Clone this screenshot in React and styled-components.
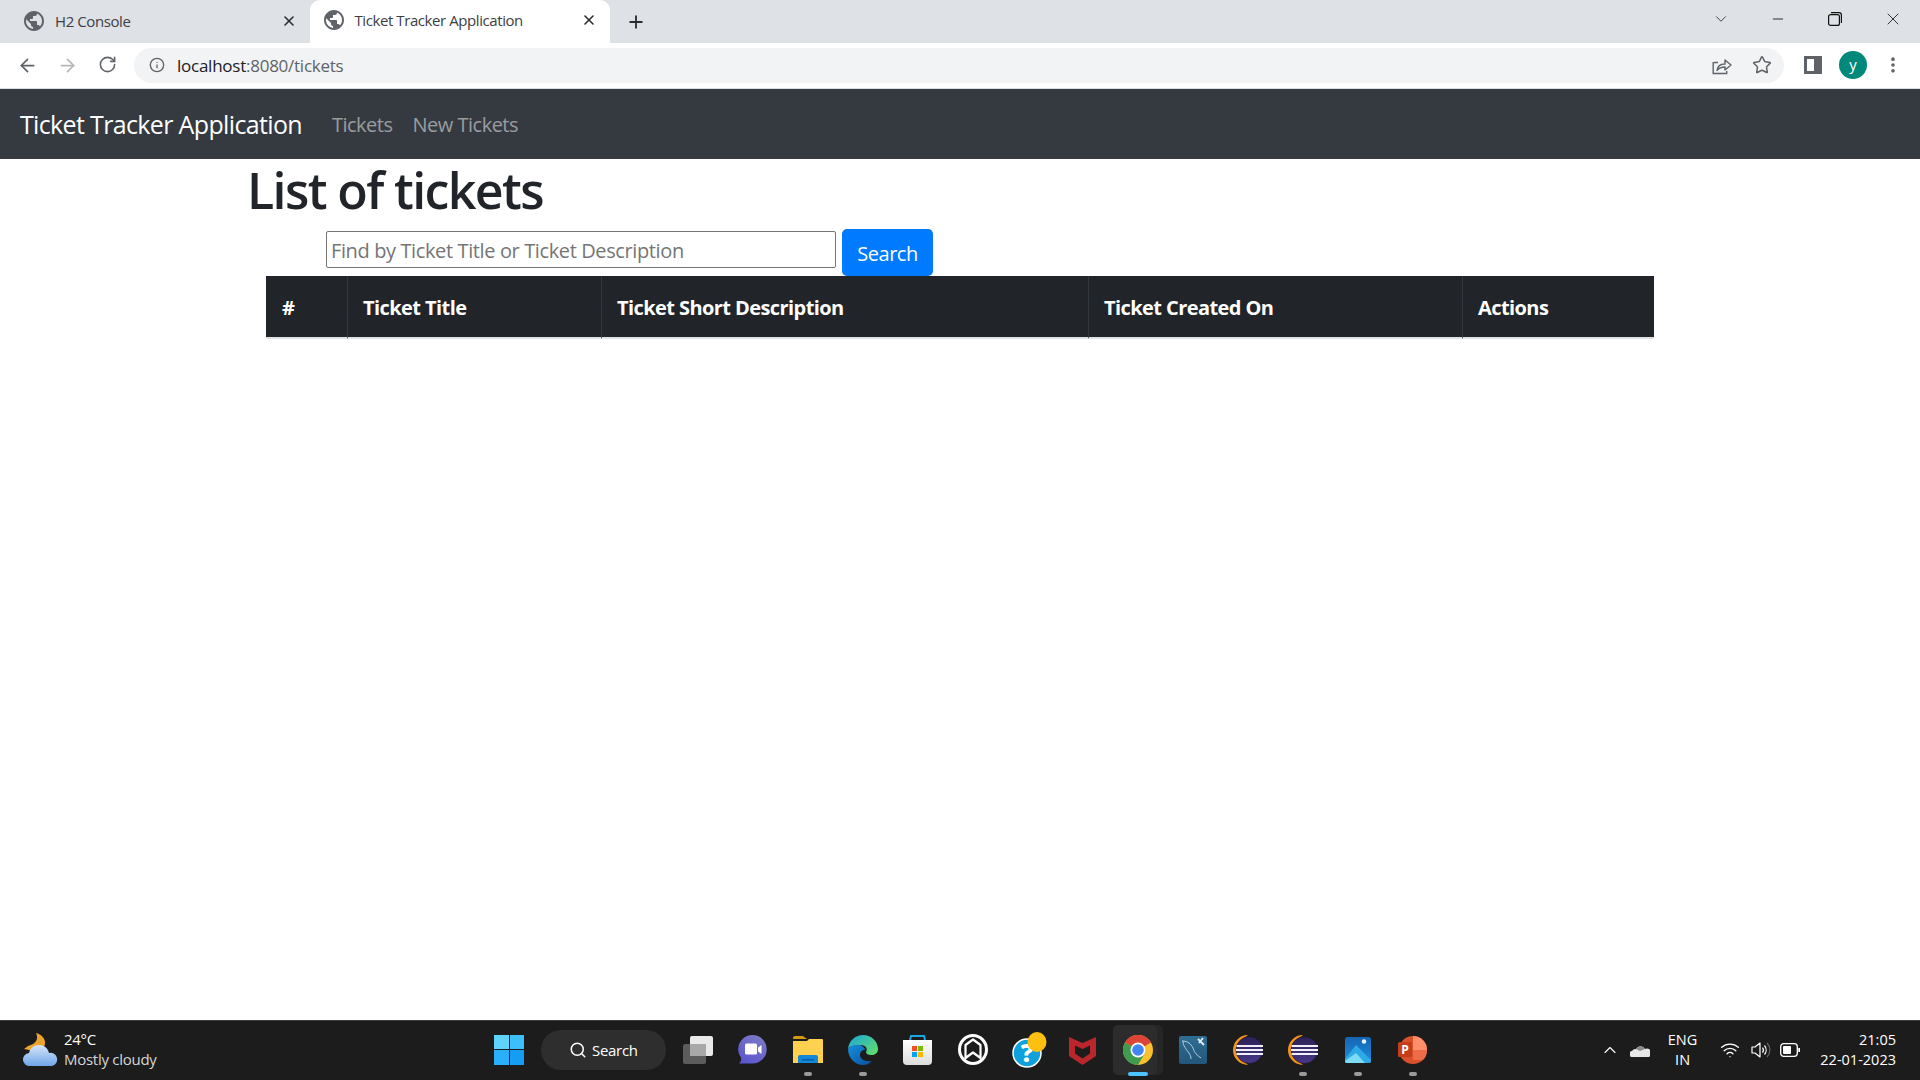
import React from 'react';
import styled, { createGlobalStyle } from 'styled-components';
import {
    ArrowLeft,
    ArrowRight,
    RotateCw,
    Info,
    X,
    Plus,
    ChevronDown,
    ChevronUp,
    Minus,
    Star,
    EllipsisVertical,
    Search,
    Wifi,
} from 'lucide-react';

const GlobalStyle = createGlobalStyle`
    html, body {
        margin: 0;
        padding: 0;
        background: #fff;
    }
    * {
        box-sizing: border-box;
    }
    body {
        font-family: "Open Sans", "Noto Sans", "Liberation Sans", sans-serif;
        color: #212529;
    }
`;

const Screen = styled.div`
    width: 1920px;
    height: 1080px;
    display: flex;
    flex-direction: column;
    overflow: hidden;
`;

/* browser chrome */
const TabStrip = styled.div`
    height: 43px;
    background: #dee1e6;
    display: flex;
    align-items: flex-end;
    padding-left: 9px;
    flex-shrink: 0;
`;

const Tab = styled.div`
    width: 300.5px;
    height: ${(p) => (p.$active ? '43px' : '42px')};
    display: flex;
    align-items: center;
    padding: 0 13px 3px ${(p) => (p.$active ? '14px' : '15px')};
    background: ${(p) => (p.$active ? '#fff' : 'transparent')};
    border-radius: 10px 10px 0 0;
    color: #3c4043;
    svg.close {
        margin-left: auto;
        color: #2a2c2f;
    }
`;

const TabTitle = styled.span`
    margin-left: 11px;
    font-size: 15px;
    letter-spacing: -0.42px;
    white-space: nowrap;
`;

const NewTab = styled.div`
    width: 40px;
    height: 43px;
    margin-left: 6px;
    display: flex;
    align-items: center;
    justify-content: center;
    color: #2a2c2f;
`;

const WindowControls = styled.div`
    margin-left: auto;
    height: 43px;
    display: flex;
    align-items: center;
    color: #333;
`;

const WindowButton = styled.div`
    width: 57px;
    display: flex;
    justify-content: center;
    padding-bottom: 6px;
    &:last-child {
        margin: 0 -1px 0 1px;
    }
`;

const Toolbar = styled.div`
    height: 46px;
    background: #fff;
    border-bottom: 1px solid #dadce0;
    display: flex;
    align-items: center;
    flex-shrink: 0;
    padding-bottom: 1px;
`;

const NavIcon = styled.div`
    width: 40px;
    display: flex;
    justify-content: center;
    color: ${(p) => (p.$off ? '#b4b6b9' : '#5f6368')};
`;

const NavIcons = styled.div`
    display: flex;
    padding-left: 7px;
`;

const Omnibox = styled.div`
    margin-left: 7px;
    width: 1650px;
    height: 35px;
    border-radius: 18px;
    background: #f1f3f4;
    display: flex;
    align-items: center;
    padding: 0 12px 0 15px;
    color: #5f6368;
`;

const Url = styled.span`
    margin-left: 12px;
    font-size: 17px;
    letter-spacing: -0.25px;
    color: #5f6368;
    b {
        font-weight: 400;
        color: #202124;
    }
`;

const OmniActions = styled.div`
    margin-left: auto;
    display: flex;
    align-items: center;
    gap: 20px;
`;

const ToolActions = styled.div`
    display: flex;
    align-items: center;
    padding-left: 20px;
    color: #5f6368;
`;

const SidePanel = styled.div`
    width: 18px;
    height: 18px;
    background: #5f6368;
    padding: 3px 8px 3px 3px;
    &::before {
        content: '';
        display: block;
        width: 100%;
        height: 100%;
        background: #fff;
    }
`;

const Avatar = styled.div`
    width: 28px;
    height: 28px;
    margin-left: 17px;
    border-radius: 50%;
    background: #00897b;
    color: #fff;
    font-size: 15px;
    display: flex;
    align-items: center;
    justify-content: center;
    padding-bottom: 3px;
`;

const MenuDots = styled.div`
    margin-left: 16px;
    display: flex;
`;

/* page */
const NavBar = styled.nav`
    height: 70px;
    background: #343a40;
    display: flex;
    align-items: center;
    padding: 0 20px 0;
    flex-shrink: 0;
`;

const Brand = styled.a`
    font-size: 25px;
    letter-spacing: -0.65px;
    color: #fff;
    white-space: nowrap;
    margin-right: 30px;
`;

const NavLink = styled.a`
    font-size: 20px;
    letter-spacing: -0.5px;
    color: rgba(255, 255, 255, 0.5);
    margin-right: 20px;
    white-space: nowrap;
`;

const Main = styled.main`
    flex: 1;
    padding-left: 249px;
    min-height: 0;
`;

const Heading = styled.h1`
    margin: 0 0 0 -2px;
    height: 70px;
    font-size: 50px;
    line-height: 62px;
    font-weight: 600;
    letter-spacing: -1.6px;
`;

const SearchRow = styled.div`
    display: flex;
    align-items: flex-start;
    margin-left: 77px;
`;

const SearchInput = styled.input`
    width: 510px;
    height: 37px;
    margin-top: 2px;
    border: 1px solid #767676;
    border-radius: 2px;
    padding: 2px 4px 0;
    font: 20px "Open Sans", sans-serif;
    letter-spacing: -0.38px;
    &::placeholder {
        color: #757575;
        opacity: 1;
    }
`;

const SearchButton = styled.button`
    width: 91px;
    height: 47px;
    margin-left: 6px;
    border: 0;
    border-radius: 5px;
    background: #007bff;
    color: #fff;
    font: 20px "Open Sans", sans-serif;
    letter-spacing: -0.5px;
    padding: 1px 0 0;
`;

const Table = styled.table`
    width: 1388px;
    margin-left: 17px;
    border-collapse: separate;
    border-spacing: 0;
    table-layout: fixed;
`;

const Th = styled.th`
    width: ${(p) => p.$w}px;
    height: 63px;
    background: #212529;
    color: #fff;
    font-size: 20px;
    font-weight: 700;
    letter-spacing: -0.58px;
    text-align: left;
    padding: 2px 15px 0 15px;
    border-left: 1px solid #32383e;
    border-bottom: 2px solid #dee2e6;
    &:first-child {
        border-left: 0;
        padding-left: 16px;
    }
`;

/* taskbar */
const Taskbar = styled.footer`
    height: 60px;
    background: #1c1c1c;
    border-top: 1px solid #3a3a3a;
    display: flex;
    align-items: center;
    color: #fff;
    flex-shrink: 0;
    padding-bottom: 2px;
`;

const Weather = styled.div`
    width: 494px;
    display: flex;
    align-items: center;
    padding-left: 23px;
    gap: 5px;
`;

const WeatherText = styled.div`
    font-size: 15px;
    line-height: 20px;
    letter-spacing: -0.27px;
    margin-top: -1px;
    span {
        display: block;
        color: #d6d6d6;
    }
`;

const StartLogo = styled.div`
    width: 30px;
    height: 30px;
    display: grid;
    grid-template-columns: 1fr 1fr;
    gap: 1px;
    margin-right: 17px;
`;

const StartPane = styled.i`
    display: block;
    background: ${(p) => p.$c};
`;

const SearchPill = styled.div`
    width: 125px;
    height: 40px;
    border-radius: 20px;
    background: #2e2e2e;
    display: flex;
    align-items: center;
    padding-left: 28px;
    gap: 5px;
    font-size: 15px;
    letter-spacing: -0.3px;
    margin-right: 4px;
`;

const TaskIcons = styled.div`
    display: flex;
    align-items: center;
`;

const TaskItem = styled.div`
    position: relative;
    width: ${(p) => (p.$active ? '44px' : '55px')};
    height: 50px;
    margin: ${(p) => (p.$active ? '0 8px 0 3px' : '0')};
    padding-left: ${(p) => (p.$active ? '5px' : '0')};
    display: flex;
    align-items: center;
    justify-content: center;
    border-radius: 5px;
    background: ${(p) => (p.$active ? '#2c2c2c' : 'transparent')};
    box-shadow: ${(p) => (p.$active ? '6px 0 0 #262626' : 'none')};
    &::after {
        content: '';
        display: ${(p) => (p.$dot ? 'block' : 'none')};
        position: absolute;
        left: ${(p) => (p.$active ? '56%' : '50%')};
        bottom: -1px;
        transform: translateX(-50%);
        width: ${(p) => (p.$active ? '20px' : '8px')};
        height: 4px;
        border-radius: 2px;
        background: ${(p) => (p.$active ? '#4cc2ff' : '#9a9a9a')};
    }
`;

const Tray = styled.div`
    margin-left: auto;
    display: flex;
    align-items: center;
    padding-right: 24px;
`;

const TrayIcon = styled.div`
    display: flex;
    margin-left: ${(p) => p.$ml || 0}px;
`;

const Lang = styled.div`
    margin-left: 18px;
    font-size: 14.5px;
    line-height: 20px;
    text-align: center;
    padding-top: 1px;
`;

const Clock = styled.div`
    margin-left: 20px;
    font-size: 14.5px;
    line-height: 20px;
    text-align: right;
`;

const Globe = () => (
    <svg width="20" height="20" viewBox="2 2 20 20" fill="#5f6368">
        <path d="M12 2C6.48 2 2 6.48 2 12s4.48 10 10 10 10-4.48 10-10S17.52 2 12 2zm-1 17.93c-3.95-.49-7-3.85-7-7.93 0-.62.08-1.21.21-1.79L9 15v1c0 1.1.9 2 2 2v1.93zm6.9-2.54c-.26-.81-1-1.39-1.9-1.39h-1v-3c0-.55-.45-1-1-1H8v-2h2c.55 0 1-.45 1-1V7h2c1.1 0 2-.9 2-2v-.41c2.93 1.19 5 4.06 5 7.41 0 2.08-.8 3.97-2.1 5.39z" />
    </svg>
);

const ShareIcon = () => (
    <svg width="20" height="20" viewBox="0 0 20 20" fill="none" stroke="#5f6368" strokeWidth="1.4">
        <path d="M2 7.5h4M1.2 7v11.5h13.5V16" />
        <path d="M5 15.5c.5-4 3.5-6.5 8-6.5V5l6 5-6 5v-3c-3 0-6 1-8 3.5z" strokeLinejoin="round" />
    </svg>
);

const RestoreIcon = () => (
    <svg width="14" height="14" viewBox="0 0 14 14" fill="none" stroke="#111" strokeWidth="1.2">
        <rect x="0.6" y="2.6" width="10.8" height="10.8" rx="2" />
        <path d="M3 .6h8a2.4 2.4 0 0 1 2.4 2.4v8" />
    </svg>
);

const WeatherIcon = () => (
    <svg width="36" height="34" viewBox="0 0 36 34">
        <defs>
            <linearGradient id="cloudFill" x1="0" y1="0" x2="0" y2="1">
                <stop offset="0" stopColor="#d7e6f8" />
                <stop offset="1" stopColor="#6ea6ea" />
            </linearGradient>
        </defs>
        <path d="M13 0c3 6 0 11-8 13l-4 3 5 1c6 2 15 0 16-6 1-5-4-10-9-11z" fill="#eda42c" />
        <path d="M7 33a6.500 6.500 0 0 1-1-13c1-5 5-8 10-8 5 0 9 3 10 8a6.500 6.500 0 0 1 3 13z" fill="url(#cloudFill)" />
    </svg>
);

const FilesIcon = () => (
    <svg width="30" height="28" viewBox="0 0 30 28">
        <rect x="0" y="8" width="23" height="20" rx="2" fill="#5c5c5c" />
        <rect x="7" y="0" width="23" height="20" rx="2" fill="#e9e9e9" />
        <rect x="7" y="8" width="16" height="12" fill="#a8a8a8" />
    </svg>
);

const TeamsIcon = () => (
    <svg width="29" height="29" viewBox="0 0 29 29">
        <defs>
            <linearGradient id="teamsFill" x1="0.8" y1="0" x2="0.2" y2="1">
                <stop offset="0" stopColor="#7c7ac4" />
                <stop offset="1" stopColor="#5a55cf" />
            </linearGradient>
        </defs>
        <path d="M14.500 0a14.250 14.250 0 1 1 0 28.500H1c2-2 2.500-4 2-6C1 20 .2 17 .2 14.250A14.250 14.250 0 0 1 14.500 0z" fill="url(#teamsFill)" />
        <rect x="7" y="8.500" width="12" height="11" rx="1.500" fill="#fff" />
        <path d="M20 12.500l3.500-2.500v9l-3.500-2.500z" fill="#fff" />
    </svg>
);

const FolderIcon = () => (
    <svg width="30" height="27" viewBox="0 0 30 27">
        <path d="M0 2a2 2 0 0 1 2-2h7c2 0 3 2 5 3H0z" fill="#d59b10" />
        <path d="M0 27V5h14l2-2h13a1 1 0 0 1 1 1v23z" fill="#ffd14f" />
        <path d="M5 27v-6a2 2 0 0 1 2-2h16a2 2 0 0 1 2 2v6z" fill="#1487d8" />
        <rect x="9" y="23" width="12" height="1.500" fill="#0a5ca3" />
    </svg>
);

const EdgeIcon = () => (
    <svg width="30" height="30" viewBox="0 0 30 30">
        <defs>
            <linearGradient id="edgeTop" x1="0" y1="0" x2="1" y2="0.8">
                <stop offset="0" stopColor="#1aa5dd" />
                <stop offset="1" stopColor="#5fdc6c" />
            </linearGradient>
            <linearGradient id="edgeBody" x1="0" y1="0" x2="1" y2="1">
                <stop offset="0" stopColor="#1690dd" />
                <stop offset="1" stopColor="#0a4f9e" />
            </linearGradient>
        </defs>
        <path d="M0 14C1 5 8 0 15 0c9 0 15 7 15 14 0 4-3 6-7 6-3 0-5-1-5-3 2-3 0-7-5-7C7 10 2 11 0 14z" fill="url(#edgeTop)" />
        <path d="M0 14c2-3 7-5 12-4 3 1 5 3 5 5-3 0-5 2-5 5 0 4 5 7 12 6-3 3-6 4-9 4C7 30 0 23 0 14z" fill="url(#edgeBody)" />
    </svg>
);

const StoreIcon = () => (
    <svg width="29" height="30" viewBox="0 0 29 30">
        <defs>
            <linearGradient id="storeFill" x1="0" y1="0" x2="0" y2="1">
                <stop offset="0" stopColor="#ffffff" />
                <stop offset="1" stopColor="#dcdcdc" />
            </linearGradient>
        </defs>
        <path d="M7 5l1-4h13l1 4" fill="none" stroke="#19a7e0" strokeWidth="2" />
        <path d="M0 5h29v21a4 4 0 0 1-4 4H4a4 4 0 0 1-4-4z" fill="url(#storeFill)" />
        <rect x="9" y="11" width="5" height="5" fill="#f25022" />
        <rect x="15" y="11" width="5" height="5" fill="#7fba00" />
        <rect x="9" y="17" width="5" height="5" fill="#00a4ef" />
        <rect x="15" y="17" width="5" height="5" fill="#ffb900" />
    </svg>
);

const ArchIcon = () => (
    <svg width="30" height="31" viewBox="0 0 30 31">
        <ellipse cx="15" cy="15.500" rx="13.500" ry="14" fill="#1c1c1c" stroke="#fff" strokeWidth="3" />
        <path d="M7.500 24V11L15 5.500 22.500 11v13l-7.500-5.500z" fill="none" stroke="#fff" strokeWidth="2.200" strokeLinejoin="round" />
    </svg>
);

const HelpIcon = () => (
    <svg width="40" height="36" viewBox="-4 0 40 36">
        <circle cx="15" cy="21" r="14" fill="#0ea1dc" stroke="#fff" strokeWidth="1.500" />
        <text x="15" y="30" fontSize="25" fontWeight="800" fill="#fff" textAnchor="middle" fontFamily="Open Sans">?</text>
        <ellipse cx="25" cy="10" rx="9.500" ry="10" fill="#fdc00f" />
    </svg>
);

const McafeeIcon = () => (
    <svg width="27" height="30" viewBox="0 0 27 30">
        <path d="M0 2l13.500 6L27 2v19l-13.500 9L0 21z" fill="#b9262c" />
        <path d="M6 10.500l7.500 3.500 7.500-3.500v8l-7.500 5-7.500-5z" fill="#1c1c1c" />
    </svg>
);

const ChromeIcon = () => (
    <svg width="30" height="30" viewBox="0 0 30 30">
        <circle cx="15" cy="15" r="15" fill="#fbc02d" />
        <path d="M15 15L2 7.500A15 15 0 0 1 28 7.500z" fill="#db4437" />
        <path d="M15 15L2 7.500A15 15 0 0 0 15 30l7.500-13z" fill="#3e9b4f" />
        <circle cx="15" cy="15" r="7.500" fill="#fff" />
        <circle cx="15" cy="15" r="5.800" fill="#4285f4" />
    </svg>
);

const WorkbenchIcon = () => (
    <svg width="28" height="28" viewBox="0 0 28 28">
        <defs>
            <linearGradient id="wbFill" x1="0" y1="0" x2="0" y2="1">
                <stop offset="0" stopColor="#2f6e94" />
                <stop offset="1" stopColor="#23567a" />
            </linearGradient>
        </defs>
        <rect width="28" height="28" rx="2" fill="url(#wbFill)" />
        <path d="M3 5c6 0 9 3 11 7 1 3 2 6 8 10M4 5c0 5 3 8 6 12 1 2 2 3 2 6" fill="none" stroke="#b4cddc" strokeWidth="1" />
        <path d="M19 3l6 6M24 2l-4 5" stroke="#e4edf3" strokeWidth="1.800" />
    </svg>
);

const EclipseIcon = () => (
    <svg width="30" height="30" viewBox="0 0 30 30">
        <defs>
            <linearGradient id="eclipseFill" x1="0" y1="0" x2="0" y2="1">
                <stop offset="0" stopColor="#2c2255" />
                <stop offset="1" stopColor="#473788" />
            </linearGradient>
        </defs>
        <path d="M15 0a15 15 0 0 0 0 30A18 18 0 0 1 15 0z" fill="#f7941e" />
        <circle cx="16.500" cy="15" r="13.500" fill="url(#eclipseFill)" stroke="#121212" strokeWidth="0.600" />
        <rect x="3.500" y="10" width="26.500" height="2" fill="#f1eff7" />
        <rect x="3" y="14" width="27" height="2" fill="#f1eff7" />
        <rect x="3.500" y="18" width="26.500" height="2" fill="#f1eff7" />
    </svg>
);

const PhotosIcon = () => (
    <svg width="26" height="26" viewBox="0 0 26 26">
        <defs>
            <linearGradient id="photoFill" x1="0" y1="0" x2="0" y2="1">
                <stop offset="0" stopColor="#1565b4" />
                <stop offset="1" stopColor="#1d8fdc" />
            </linearGradient>
        </defs>
        <rect width="26" height="26" rx="2.500" fill="url(#photoFill)" />
        <circle cx="19" cy="4.500" r="2.200" fill="#e6f4ff" />
        <path d="M0 22L11 8l15 15v1a2 2 0 0 1-2 2H2a2 2 0 0 1-2-2z" fill="#2fa9e6" />
        <path d="M0 24l11-8 9 10H2a2 2 0 0 1-2-2z" fill="#7cdcf5" />
    </svg>
);

const PowerPointIcon = () => (
    <svg width="29" height="28" viewBox="0 0 29 28">
        <circle cx="15" cy="14" r="14" fill="#d9512c" />
        <path d="M15 0a14 14 0 0 1 14 14H15z" fill="#ff8f6b" />
        <path d="M15 14h14a14 14 0 0 1-4 10H15z" fill="#ed6c47" />
        <rect x="0" y="6" width="14" height="15" rx="1.500" fill="#c43e1c" />
        <text x="7" y="18" fontSize="12" fontWeight="700" fill="#fff" textAnchor="middle" fontFamily="Open Sans">P</text>
    </svg>
);

const CloudIcon = () => (
    <svg width="20" height="14" viewBox="0 0 20 14">
        <path d="M3 14a3 3 0 0 1-1-6 4 4 0 0 1 4-2 5 5 0 0 1 9 0 4 4 0 0 1 4 8z" fill="#e6e6e6" />
        <path d="M6 6a5 5 0 0 1 9 0l-5 2z" fill="#8a8a8a" />
    </svg>
);

const SpeakerIcon = () => (
    <svg width="20" height="18" viewBox="0 0 20 18" fill="none" stroke="#fff" strokeWidth="1.200">
        <path d="M1 6h3l5-4v14l-5-4H1z" strokeLinejoin="round" />
        <path d="M11.500 6.500a4 4 0 0 1 0 5M13.500 4.500a7 7 0 0 1 0 9" />
        <path d="M16 2a10 10 0 0 1 0 14" stroke="#666" />
    </svg>
);

const BatteryIcon = () => (
    <svg width="20" height="14" viewBox="0 0 20 14">
        <rect x="0.700" y="0.700" width="16.600" height="12.600" rx="3" fill="none" stroke="#fff" strokeWidth="1.300" />
        <rect x="3" y="3" width="8" height="8" rx="1" fill="#fff" />
        <rect x="18.300" y="5" width="1.700" height="4" fill="#fff" />
    </svg>
);

const taskIcons = [
    { key: 'files', icon: <FilesIcon /> },
    { key: 'teams', icon: <TeamsIcon /> },
    { key: 'folder', icon: <FolderIcon />, dot: true },
    { key: 'edge', icon: <EdgeIcon />, dot: true },
    { key: 'store', icon: <StoreIcon /> },
    { key: 'arch', icon: <ArchIcon /> },
    { key: 'help', icon: <HelpIcon /> },
    { key: 'mcafee', icon: <McafeeIcon /> },
    { key: 'chrome', icon: <ChromeIcon />, dot: true, active: true },
    { key: 'workbench', icon: <WorkbenchIcon /> },
    { key: 'eclipse1', icon: <EclipseIcon /> },
    { key: 'eclipse2', icon: <EclipseIcon />, dot: true },
    { key: 'photos', icon: <PhotosIcon />, dot: true },
    { key: 'ppt', icon: <PowerPointIcon />, dot: true },
];

const columns = [
    { label: '#', w: 81 },
    { label: 'Ticket Title', w: 254 },
    { label: 'Ticket Short Description', w: 487 },
    { label: 'Ticket Created On', w: 374 },
    { label: 'Actions', w: 192 },
];

export default function App() {
    return (
        <Screen>
            <GlobalStyle />
            <TabStrip>
                <Tab>
                    <Globe />
                    <TabTitle>H2 Console</TabTitle>
                    <X className="close" size={16} strokeWidth={2.4} />
                </Tab>
                <Tab $active>
                    <Globe />
                    <TabTitle>Ticket Tracker Application</TabTitle>
                    <X className="close" size={16} strokeWidth={2.4} />
                </Tab>
                <NewTab>
                    <Plus size={20} strokeWidth={2.2} />
                </NewTab>
                <WindowControls>
                    <WindowButton>
                        <ChevronDown size={18} strokeWidth={1.2} />
                    </WindowButton>
                    <WindowButton>
                        <Minus size={16} strokeWidth={1.3} color="#111" />
                    </WindowButton>
                    <WindowButton>
                        <RestoreIcon />
                    </WindowButton>
                    <WindowButton>
                        <X size={20} strokeWidth={1.2} />
                    </WindowButton>
                </WindowControls>
            </TabStrip>
            <Toolbar>
                <NavIcons>
                    <NavIcon>
                        <ArrowLeft size={21} strokeWidth={2} />
                    </NavIcon>
                    <NavIcon $off>
                        <ArrowRight size={21} strokeWidth={2} />
                    </NavIcon>
                    <NavIcon>
                        <RotateCw size={19} strokeWidth={2} />
                    </NavIcon>
                </NavIcons>
                <Omnibox>
                    <Info size={16} strokeWidth={2} />
                    <Url>
                        <b>localhost</b>:8080/tickets
                    </Url>
                    <OmniActions>
                        <ShareIcon />
                        <Star size={20} strokeWidth={1.8} />
                    </OmniActions>
                </Omnibox>
                <ToolActions>
                    <SidePanel />
                    <Avatar>y</Avatar>
                    <MenuDots>
                        <EllipsisVertical size={20} strokeWidth={2.4} />
                    </MenuDots>
                </ToolActions>
            </Toolbar>

            <NavBar>
                <Brand>Ticket Tracker Application</Brand>
                <NavLink>Tickets</NavLink>
                <NavLink>New Tickets</NavLink>
            </NavBar>

            <Main>
                <Heading>List of tickets</Heading>
                <SearchRow>
                    <SearchInput placeholder="Find by Ticket Title or Ticket Description" />
                    <SearchButton>Search</SearchButton>
                </SearchRow>
                <Table>
                    <thead>
                        <tr>
                            {columns.map((col) => (
                                <Th key={col.label} $w={col.w}>
                                    {col.label}
                                </Th>
                            ))}
                        </tr>
                    </thead>
                </Table>
            </Main>

            <Taskbar>
                <Weather>
                    <WeatherIcon />
                    <WeatherText>
                        24°C
                        <span>Mostly cloudy</span>
                    </WeatherText>
                </Weather>
                <StartLogo>
                    <StartPane $c="#5fd4fb" />
                    <StartPane $c="#3cc0fb" />
                    <StartPane $c="#2ab0fa" />
                    <StartPane $c="#149df3" />
                </StartLogo>
                <SearchPill>
                    <Search size={18} strokeWidth={2} />
                    Search
                </SearchPill>
                <TaskIcons>
                    {taskIcons.map((item) => (
                        <TaskItem key={item.key} $dot={item.dot} $active={item.active}>
                            {item.icon}
                        </TaskItem>
                    ))}
                </TaskIcons>
                <Tray>
                    <TrayIcon>
                        <ChevronUp size={20} strokeWidth={1.3} />
                    </TrayIcon>
                    <TrayIcon $ml={10}>
                        <CloudIcon />
                    </TrayIcon>
                    <Lang>
                        ENG
                        <br />
                        IN
                    </Lang>
                    <TrayIcon $ml={23}>
                        <Wifi size={20} strokeWidth={1.6} />
                    </TrayIcon>
                    <TrayIcon $ml={11}>
                        <SpeakerIcon />
                    </TrayIcon>
                    <TrayIcon $ml={9}>
                        <BatteryIcon />
                    </TrayIcon>
                    <Clock>
                        21:05
                        <br />
                        22-01-2023
                    </Clock>
                </Tray>
            </Taskbar>
        </Screen>
    );
}
